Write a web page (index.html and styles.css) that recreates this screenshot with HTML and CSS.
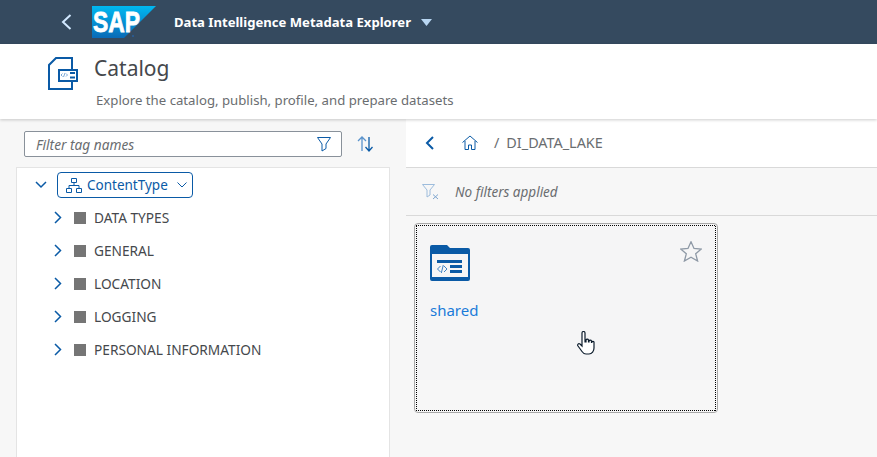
FILE: index.html
```html
<!DOCTYPE html>
<html lang="en">
<head>
    <meta charset="UTF-8">
    <meta name="viewport" content="width=device-width, initial-scale=1.0">
    <title>Catalog</title>
    <link rel="stylesheet" href="styles.css">
</head>
<body>
    <header class="shell">
        <svg class="shell-back" width="12" height="16" viewBox="0 0 12 16"><path d="M10.500 1 3 8l7.500 7" fill="none" stroke="#d1e8ff" stroke-width="2"/></svg>
        <svg class="logo" width="64" height="32" viewBox="0 0 64 32">
            <defs><linearGradient id="sapBlue" x1="0" y1="0" x2="0" y2="1"><stop offset="0" stop-color="#00b8f1"/><stop offset="1" stop-color="#0a6ab6"/></linearGradient></defs>
            <polygon points="0,0 64,0 32,32 0,32" fill="url(#sapBlue)"/>
            <text x="1" y="26" class="logo-text" textLength="47" lengthAdjust="spacingAndGlyphs">SAP</text>
            <circle cx="41" cy="30" r="1" fill="#2a5f9e"/>
        </svg>
        <span class="shell-title">Data Intelligence Metadata Explorer</span>
        <svg class="shell-caret" width="11" height="7" viewBox="0 0 11 7"><path d="M0 0h11L5.500 7z" fill="#b8d6f2"/></svg>
    </header>

    <section class="page-head">
        <svg class="page-icon" width="32" height="34" viewBox="0 0 32 34">
            <path d="M25 12V1H9L2 8v24h23v-7" fill="none" stroke="#0a5aa6" stroke-width="2"/>
            <rect x="12" y="13" width="18" height="11" fill="#fff" stroke="#0a5aa6" stroke-width="2"/>
            <path d="M23 15h5v2h-5zM23 19.500h5v2h-5z" fill="#0a5aa6"/>
            <path d="M15.500 16.500l-1.500 1.500 1.500 1.500M19 16.500l1.500 1.500-1.500 1.500M18 16l-1.500 4" fill="none" stroke="#5a93cc" stroke-width=".8"/>
        </svg>
        <div class="page-text">
            <h1>Catalog</h1>
            <p>Explore the catalog, publish, profile, and prepare datasets</p>
        </div>
    </section>

    <main class="columns">
        <aside class="left">
            <div class="filter-row">
                <div class="search">
                    <span>Filter tag names</span>
                    <svg width="16" height="16" viewBox="0 0 16 16"><path d="M1.500 1.500h13L10 8v4.500l-4 2.500V8z" fill="none" stroke="#0a5aa6" stroke-linejoin="round"/></svg>
                </div>
                <svg class="sort" width="18" height="16" viewBox="0 0 18 16"><path d="M5 15V1M1 5l4-4 4 4" fill="none" stroke="#5a93cc" stroke-width="1.300"/><path d="M12 1v14M8.500 11l3.500 4 3.500-4" fill="none" stroke="#0a5aa6" stroke-width="1.300"/></svg>
            </div>
            <div class="tree">
                <div class="tree-root">
                    <svg class="chev-down" width="12" height="8" viewBox="0 0 12 8"><path d="M1 1l5 5 5-5" fill="none" stroke="#0a5aa6" stroke-width="1.500"/></svg>
                    <div class="type-btn">
                        <svg width="16" height="15" viewBox="0 0 16 15"><path d="M5.500.5h5v4h-5zM.5 10.500h5v4h-5zM10.500 10.500h5v4h-5zM8 4.500v3M3 10.500v-3h10v3" fill="none" stroke="#0a5aa6"/></svg>
                        <span>ContentType</span>
                        <svg width="10" height="6" viewBox="0 0 10 6"><path d="M.5.5 5 5 9.500.5" fill="none" stroke="#0a5aa6"/></svg>
                    </div>
                </div>
                <div class="tree-row"><svg width="8" height="13" viewBox="0 0 8 13"><path d="M1 1l5.500 5.500L1 12" fill="none" stroke="#0a5aa6" stroke-width="1.500"/></svg><i></i><span>DATA TYPES</span></div>
                <div class="tree-row"><svg width="8" height="13" viewBox="0 0 8 13"><path d="M1 1l5.500 5.500L1 12" fill="none" stroke="#0a5aa6" stroke-width="1.500"/></svg><i></i><span>GENERAL</span></div>
                <div class="tree-row"><svg width="8" height="13" viewBox="0 0 8 13"><path d="M1 1l5.500 5.500L1 12" fill="none" stroke="#0a5aa6" stroke-width="1.500"/></svg><i></i><span>LOCATION</span></div>
                <div class="tree-row"><svg width="8" height="13" viewBox="0 0 8 13"><path d="M1 1l5.500 5.500L1 12" fill="none" stroke="#0a5aa6" stroke-width="1.500"/></svg><i></i><span>LOGGING</span></div>
                <div class="tree-row"><svg width="8" height="13" viewBox="0 0 8 13"><path d="M1 1l5.500 5.500L1 12" fill="none" stroke="#0a5aa6" stroke-width="1.500"/></svg><i></i><span>PERSONAL INFORMATION</span></div>
            </div>
        </aside>

        <section class="right">
            <div class="crumbs">
                <svg class="crumb-back" width="10" height="14" viewBox="0 0 10 14"><path d="M8 1 2 7l6 6" fill="none" stroke="#0a5aa6" stroke-width="2"/></svg>
                <svg class="home" width="16" height="15" viewBox="0 0 16 15"><path d="M.5 7.500 8 1l7.500 6.500M3 6v8.500h3.500V10h3v4.500H13V6" fill="none" stroke="#0a5aa6"/></svg>
                <span class="slash">/</span>
                <span class="crumb-name">DI_DATA_LAKE</span>
            </div>
            <div class="no-filters">
                <svg width="18" height="16" viewBox="0 0 18 16"><path d="M.5.500h12L8 6v5l-3 2V6z" fill="none" stroke="#9dbcdc"/><path d="M11 10.500l5 4.500m0-4.500-5 4.500" fill="none" stroke="#7fa6cf"/></svg>
                <span>No filters applied</span>
            </div>
            <div class="cards">
                <article class="card">
                    <div class="card-top">
                        <svg class="folder" width="40" height="36" viewBox="0 0 40 36">
                            <path d="M0 2a2 2 0 0 1 2-2h15l3 3h18a2 2 0 0 1 2 2v29a2 2 0 0 1-2 2H2a2 2 0 0 1-2-2z" fill="#0a5aa6"/>
                            <rect x="2" y="9" width="36" height="23" fill="#f5f5f6"/>
                            <path d="M7 15h25v3H7zM20 20h12v3H20zM20 25h12v3H20z" fill="#0a5aa6"/>
                            <path d="M10.500 21l-3 3 3 3M14 21l3 3-3 3M13.300 20l-2 8" fill="none" stroke="#3d82c4"/>
                        </svg>
                        <svg class="star" width="22" height="21" viewBox="0 0 22 21"><path d="M11 .8l3 6.700 7.300.5-5.600 4.800 1.900 7.200-6.600-3.800-6.600 3.800 1.900-7.200L.7 8 8 7.500z" fill="none" stroke="#8e99a6" stroke-width="1.300"/></svg>
                    </div>
                    <a class="card-name">shared</a>
                </article>
            </div>
        </section>
    </main>

    <svg class="cursor" width="18" height="25" viewBox="0 0 18 25"><path d="M5 2a1.500 1.500 0 0 1 3 0v9l1 0V9a1.300 1.300 0 0 1 2.500 0v2h.5v-1a1.300 1.300 0 0 1 2.500 0v1.500h.3v-.5a1.200 1.200 0 0 1 2.200 0v6c0 3-2 6-5 6H9c-2 0-3-1-4-2.500L1 15c-1-1.500.5-3 2-2l2 2z" fill="#fff" stroke="#0c1c2c" stroke-width="1.200"/></svg>
</body>
</html>
```
FILE: styles.css
```css
* {
    box-sizing: border-box;
}

body {
    margin: 0;
    height: 457px;
    overflow: hidden;
    background-color: #f7f7f7;
    font-family: "Noto Sans", Arial, sans-serif;
    color: #45484c;
    position: relative;
}

.shell {
    height: 44px;
    background-color: #354a5f;
    display: flex;
    align-items: center;
    padding-left: 60px;
}

.shell-back {
    margin-right: 20px;
}

.logo {
    margin-right: 18px;
}

.logo-text {
    font-family: "Liberation Sans", sans-serif;
    font-weight: bold;
    font-size: 29px;
    fill: #fff;
    stroke: #fff;
    stroke-width: 0.8px;
}

.shell-title {
    color: #fff;
    font-size: 13.100px;
    font-weight: 700;
    margin-right: 10px;
}

.page-head {
    height: 75px;
    background-color: #fff;
    box-shadow: 0 1px 3px rgba(0, 0, 0, 0.2);
    display: flex;
    align-items: flex-start;
    padding: 13px 0 0 47px;
    position: relative;
}

.page-text {
    margin-left: 15px;
}

h1 {
    margin: -1px 0 0;
    font-size: 21px;
    font-weight: 400;
    line-height: 24px;
}

.page-text p {
    margin: 12px 0 0 2px;
    font-size: 13.200px;
    line-height: 16px;
    color: #6a6d70;
}

.columns {
    display: flex;
    height: 338px;
}

.left {
    width: 406px;
    padding-top: 12px;
}

.filter-row {
    display: flex;
    align-items: center;
    padding-left: 24px;
    height: 26px;
}

.search {
    width: 318px;
    height: 26px;
    background-color: #fff;
    border: 1px solid #89919a;
    border-radius: 2px;
    display: flex;
    align-items: center;
    justify-content: space-between;
    padding: 0 9px 0 11px;
    font-size: 13.700px;
    font-style: italic;
    color: #6a6d70;
}

.sort {
    margin-left: 15px;
}

.tree {
    width: 374px;
    height: 290px;
    margin: 10px 0 0 16px;
    background-color: #fff;
    border: 1px solid #e4e4e4;
    border-bottom: none;
    padding-top: 4px;
}

.tree-root {
    display: flex;
    align-items: center;
    height: 26px;
    padding-left: 18px;
}

.type-btn {
    display: flex;
    align-items: center;
    height: 26px;
    width: 136px;
    margin-left: 10px;
    padding-left: 8px;
    border: 1px solid #0a5aa6;
    border-radius: 4px;
    font-size: 13.500px;
    color: #0a5aa6;
}

.type-btn span {
    margin: 0 9px 0 5px;
}

.tree-row {
    display: flex;
    align-items: center;
    height: 33px;
    padding-left: 37px;
    font-size: 13.700px;
}

.tree-root + .tree-row {
    margin-top: 3px;
}

.tree-row i {
    width: 12px;
    height: 12px;
    background-color: #757575;
    margin: 0 8px 0 12px;
}

.right {
    flex: 1;
}

.crumbs {
    height: 49px;
    background-color: #fff;
    border-bottom: 1px solid #d9d9d9;
    display: flex;
    align-items: center;
    padding: 0 0 1px 19px;
    font-size: 14.400px;
    color: #6a6d70;
}

.home {
    margin-left: 27px;
}

.slash {
    margin: 0 7px 0 16px;
}

.no-filters {
    height: 48px;
    border-bottom: 1px solid #d9d9d9;
    display: flex;
    align-items: center;
    padding-left: 16px;
    font-size: 13.500px;
    font-style: italic;
    color: #6a6d70;
}

.no-filters span {
    margin-left: 15px;
}

.cards {
    padding: 7px 0 0 8px;
}

.card {
    width: 304px;
    height: 190px;
    border: 1px solid #a8a8a8;
    border-radius: 4px;
    background: linear-gradient(#f5f5f6 156px, #f7f7f7 156px);
    padding: 21px 15px;
    position: relative;
}

/* focus ring, dots 1px on 1px off */
.card::after {
    content: "";
    position: absolute;
    inset: 1px;
    background-image:
        repeating-linear-gradient(90deg, #000 0 1px, transparent 1px 2px),
        repeating-linear-gradient(90deg, #000 0 1px, transparent 1px 2px),
        repeating-linear-gradient(0deg, #000 0 1px, transparent 1px 2px),
        repeating-linear-gradient(0deg, #000 0 1px, transparent 1px 2px);
    background-size: 100% 1px, 100% 1px, 1px 100%, 1px 100%;
    background-position: 0 0, 0 100%, 0 0, 100% 0;
    background-repeat: no-repeat;
}

.card-top {
    display: flex;
    justify-content: space-between;
    align-items: flex-start;
}

.star {
    margin-top: -4px;
}

.card-name {
    display: block;
    margin-top: 19px;
    font-size: 15px;
    color: #1a7bd9;
}

.cursor {
    position: absolute;
    left: 577px;
    top: 331px;
}
```
